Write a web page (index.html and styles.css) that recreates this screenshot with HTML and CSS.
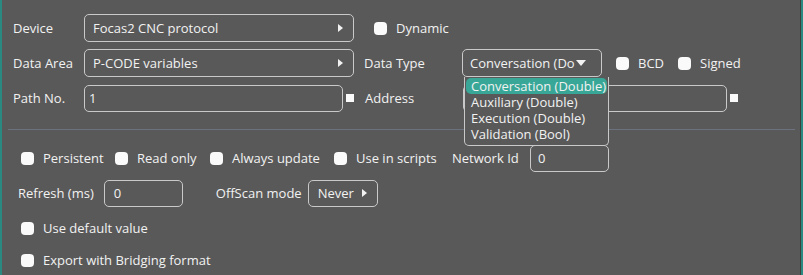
FILE: index.html
```html
<!DOCTYPE html>
<html lang="en">
<head>
    <meta charset="UTF-8">
    <title>Tag properties</title>
    <link rel="stylesheet" href="styles.css">
</head>
<body>
    <div class="panel">
        <div class="top">
            <div class="row">
                <span class="label">Device</span>
                <div class="box picker wide">Focas2 CNC protocol <span class="tri-right"></span></div>
                <label class="check dyn"><span class="tick"></span>Dynamic</label>
            </div>
            <div class="row">
                <span class="label">Data Area</span>
                <div class="box picker wide">P-CODE variables <span class="tri-right"></span></div>
                <span class="label mid">Data Type</span>
                <div class="box select">Conversation (Do<span class="tri-down"></span></div>
                <label class="check bcd"><span class="tick"></span>BCD</label>
                <label class="check"><span class="tick"></span>Signed</label>
            </div>
            <div class="row">
                <span class="label">Path No.</span>
                <div class="box text path">1</div>
                <span class="mark"></span>
                <span class="label mid addr">Address</span>
                <div class="box text address"></div>
                <span class="mark"></span>
            </div>
            <ul class="dropdown">
                <li class="selected">Conversation (Double)</li>
                <li>Auxiliary (Double)</li>
                <li>Execution (Double)</li>
                <li>Validation (Bool)</li>
            </ul>
        </div>
        <hr class="sep">
        <div class="bottom">
            <div class="row options">
                <label class="check opt-persist"><span class="tick"></span>Persistent</label>
                <label class="check opt-read"><span class="tick"></span>Read only</label>
                <label class="check opt-always"><span class="tick"></span>Always update</label>
                <label class="check opt-scripts"><span class="tick"></span>Use in scripts</label>
                <span class="label net">Network Id</span>
                <div class="box text small">0</div>
            </div>
            <div class="row refresh">
                <span class="label">Refresh (ms)</span>
                <div class="box text small pad">0</div>
                <span class="label offscan">OffScan mode</span>
                <div class="box button">Never <span class="tri-right"></span></div>
            </div>
            <div class="row single">
                <label class="check"><span class="tick"></span>Use default value</label>
            </div>
            <div class="row single last">
                <label class="check"><span class="tick"></span>Export with Bridging format</label>
            </div>
        </div>
    </div>
</body>
</html>
```
FILE: styles.css
```css
html, body {
    margin: 0;
    padding: 0;
}
body {
    width: 803px;
    height: 275px;
    overflow: hidden;
    background: #595959;
    font-family: 'Open Sans', 'Noto Sans', Arial, sans-serif;
    font-size: 13px;
    color: #f2f2f2;
}
.panel {
    box-sizing: border-box;
    height: 275px;
    border-left: 2px solid #2a8a82;
    border-right: 2px solid #2a8a82;
    box-shadow: inset -1px 0 0 #3e3e3e;
}
.top {
    position: relative;
    padding: 14px 0 0 11px;
}
.row {
    display: flex;
    align-items: center;
    height: 28px;
    margin-bottom: 7px;
}
.label {
    width: 71px;
    flex: none;
    white-space: nowrap;
}
.label.mid {
    width: 98px;
    margin-left: 10px;
}
.label.addr {
    margin-left: 11px;
}
.box {
    box-sizing: border-box;
    height: 28px;
    border: 1px solid #c9c9c9;
    border-radius: 5px;
    display: flex;
    align-items: center;
    white-space: nowrap;
    flex: none;
}
.picker {
    padding: 0 10px 0 8px;
    justify-content: space-between;
}
.wide {
    width: 270px;
}
.tri-right {
    width: 0;
    height: 0;
    border-top: 4px solid transparent;
    border-bottom: 4px solid transparent;
    border-left: 5px solid #f2f2f2;
}
.tri-down {
    width: 0;
    height: 0;
    margin-left: 1px;
    border-left: 5px solid transparent;
    border-right: 5px solid transparent;
    border-top: 6px solid #f2f2f2;
}
.select {
    width: 140px;
    padding-left: 7px;
    overflow: hidden;
}
.check {
    display: flex;
    align-items: center;
    white-space: nowrap;
}
.tick {
    width: 13px;
    height: 13px;
    border-radius: 4px;
    background: #fafafa;
    margin-right: 9px;
    flex: none;
}
.dyn {
    margin-left: 20px;
}
.bcd {
    margin-left: 14px;
    margin-right: 14px;
}
.text {
    padding-left: 4px;
}
.path {
    width: 259px;
    height: 27px;
}
.address {
    width: 264px;
    height: 27px;
}
.mark {
    width: 8px;
    height: 8px;
    background: #fafafa;
    margin-left: 3px;
    flex: none;
}
.dropdown {
    position: absolute;
    left: 462px;
    top: 77px;
    width: 145px;
    height: 69px;
    box-sizing: border-box;
    margin: 0;
    padding: 1px 1px 0 1px;
    list-style: none;
    border: 1px solid #c9c9c9;
    border-top: none;
    border-radius: 0 0 5px 5px;
    background: #595959;
}
.dropdown li {
    height: 16px;
    line-height: 16px;
    padding-left: 5px;
    white-space: nowrap;
}
.dropdown .selected {
    background: #38a797;
    border-radius: 5px;
}
.sep {
    margin: 17px 6px 0 6px;
    border: none;
    height: 1px;
    background: #6b717e;
}
.bottom {
    padding: 14px 0 0 19px;
}
.options .check {
    flex: none;
}
.opt-persist {
    width: 94px;
}
.opt-read {
    width: 95px;
}
.opt-always {
    width: 124px;
}
.opt-scripts {
    width: 118px;
}
.options .box,
.refresh .box {
    height: 27px;
}
.net {
    width: 78px;
}
.small {
    width: 79px;
    padding-left: 7px;
}
.refresh {
    margin-left: -3px;
}
.refresh .label {
    width: auto;
    margin-right: 10px;
}
.pad {
    padding-left: 9px;
}
.refresh .offscan {
    margin-left: 33px;
    margin-right: 6px;
}
.button {
    width: 70px;
    padding: 0 10px 0 9px;
    justify-content: space-between;
}
.single {
    height: 20px;
    margin: 11px 0 0 0;
}
.single.last {
    margin-top: 12px;
}
```
